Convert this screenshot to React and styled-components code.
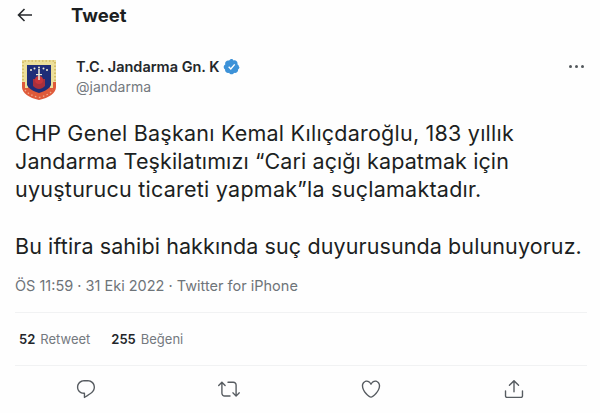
import React from "react";
import styled, { createGlobalStyle } from "styled-components";

const Global = createGlobalStyle`
  html, body { margin: 0; padding: 0; background: #fff; }
  body { font-family: "Inter", "Liberation Sans", sans-serif; color: #14171a; }
`;

const Page = styled.div`
  width: 600px; height: 413px; overflow: hidden; background: #fefefe;
  display: flex; flex-direction: column; box-sizing: border-box;
`;
const Header = styled.header`
  height: 30px; display: flex; align-items: center; padding-left: 16px; gap: 37px;
`;
const HeaderTitle = styled.h1`
  margin: 0; font-size: 18.5px; font-weight: 700; color: #1c1f22;
`;
const AuthorRow = styled.div`
  margin-top: 26px; padding: 0 16px 0 22px; display: flex; align-items: flex-start;
`;
const EmblemBox = styled.div`
  margin-top: 4px; width: 34px; height: 40px; flex: none; display: flex;
`;
const AuthorText = styled.div`
  margin-left: 20px; display: flex; flex-direction: column; flex: 1;
`;
const NameRow = styled.div`
  display: flex; align-items: center; gap: 3px; height: 21px;
  font-size: 14.5px; font-weight: 600; color: #24272a;
`;
const Handle = styled.div`
  margin-top: 1px; font-size: 14px; line-height: 18px; color: #74797e;
`;
const More = styled.div`
  display: flex; gap: 3px; margin-top: 9px;
`;
const Dot = styled.span`
  width: 3px; height: 3px; border-radius: 50%; background: #53585c;
`;
const Body = styled.div`
  margin: 19px 0 0 15px; font-size: 21.5px; line-height: 28.2px; color: #1c1f22;
`;
const BodyLine = styled.div`
  white-space: nowrap;
  letter-spacing: ${p => p.$track}px;
  margin-top: ${p => (p.$gap ? "28.2px" : "0")};
`;
const Meta = styled.div`
  margin: 16px 0 0 15px; font-size: 14.5px; line-height: 20px; color: #6e7479;
`;
const Stats = styled.div`
  margin: 16px 13px 0 15px; height: 54px; box-sizing: border-box;
  border-top: 1px solid #f1f2f3; border-bottom: 1px solid #f1f2f3;
  display: flex; align-items: center; gap: 21px; padding-left: 4px;
  font-size: 13px; color: #74797e;
`;
const Stat = styled.span`
  b { font-weight: 600; color: #22252a; margin-right: 5px; }
`;
const Actions = styled.div`
  display: flex; justify-content: space-between; padding: 0 75px 0 75px; margin-top: 12px;
  color: #565b60;
`;

const Back = () => (
  <svg width="18" height="16" viewBox="0 0 18 16" fill="none" stroke="#26292c" strokeWidth="1.6">
    <path d="M16 8H2.500M8.500 2 2.500 8l6 6" />
  </svg>
);
const Verified = () => (
  <svg width="17" height="17" viewBox="0 0 24 24">
    <path fill="#3d92d8" d="M22.500 12.500c0-1.600-.9-3-2.200-3.700.2-.4.2-1 .2-1.500 0-2.300-1.900-4.200-4.200-4.200-.5 0-1 .1-1.500.3C14.100 2.100 13.100 1.500 12 1.500s-2.600.9-3.300 2.200c-.5-.2-1-.3-1.500-.3-2.300 0-4.200 1.900-4.200 4.200 0 .5.100 1 .2 1.500-1.300.7-2.200 2.100-2.200 3.700 0 1.500.8 2.800 2 3.500 0 .2-.1.400-.1.700 0 2.300 1.900 4.200 4.200 4.200.5 0 1-.1 1.500-.3.7 1.300 2 2.200 3.500 2.200s2.800-.9 3.500-2.200c.5.200 1 .3 1.500.3 2.300 0 4.200-1.900 4.200-4.200 0-.3 0-.5-.1-.7 1.200-.7 2-2 2-3.500z" />
    <path fill="none" stroke="#fff" strokeWidth="2" d="M8 12.500l3 3 5.500-6.500" />
  </svg>
);
const Emblem = () => (
  <svg width="34" height="40" viewBox="0 0 34 40">
    <path fill="#ecdf9a" d="M0 0h34v26H0z" />
    <path fill="none" stroke="#c9a94a" strokeWidth="1.200" strokeDasharray="1.500 2" d="M1 24V1h32v23" />
    <path fill="#df5a3a" d="M0 22h34v5c0 6-7 11-17 13C7 38 0 33 0 27z" />
    <path fill="#ecdf9a" d="M3 22h3v6H3zM28 22h3v6h-3z" />
    <path fill="#1e2d78" d="M5 5h24v20c-2 4-6 6-12 8-6-2-10-4-12-8z" />
    <path fill="#a9303c" d="M11 19h12v7c-2 2-4 3-6 3s-4-1-6-3z" />
    <circle cx="17" cy="20" r="4" fill="#c8353a" />
    <path fill="#e9e6d6" d="M16.200 9h1.600v11h-1.600z" />
    <path fill="#e9e6d6" d="M14 14h6v1.200h-6z" />
    <g fill="#f2ecd2">
      <circle cx="9" cy="10" r="1" />
      <circle cx="12.500" cy="8.500" r="1" />
      <circle cx="21.500" cy="8.500" r="1" />
      <circle cx="25" cy="10" r="1" />
      <circle cx="17" cy="7.500" r="1" />
    </g>
    <path fill="none" stroke="#f0a98c" strokeDasharray="1.500 2.500" strokeWidth="1.300" d="M3 30c3 4 8 6 14 7.500 6-1.500 11-3.500 14-7.500" />
  </svg>
);
const Icon = ({ children }) => (
  <svg width="22" height="22" viewBox="0 0 24 24" fill="currentColor">
    {children}
  </svg>
);

export default function App() {
  return (
    <Page>
      <Global />
      <Header>
        <Back />
        <HeaderTitle>Tweet</HeaderTitle>
      </Header>
      <AuthorRow>
        <EmblemBox><Emblem /></EmblemBox>
        <AuthorText>
          <NameRow>T.C. Jandarma Gn. K <Verified /></NameRow>
          <Handle>@jandarma</Handle>
        </AuthorText>
        <More><Dot /><Dot /><Dot /></More>
      </AuthorRow>
      <Body>
        <BodyLine $track={0.225}>CHP Genel Başkanı Kemal Kılıçdaroğlu, 183 yıllık</BodyLine>
        <BodyLine $track={0.106}>Jandarma Teşkilatımızı “Cari açığı kapatmak için</BodyLine>
        <BodyLine $track={0.252}>uyuşturucu ticareti yapmak”la suçlamaktadır.</BodyLine>
        <BodyLine $gap $track={0.098}>Bu iftira sahibi hakkında suç duyurusunda bulunuyoruz.</BodyLine>
      </Body>
      <Meta>ÖS 11:59 · 31 Eki 2022 · Twitter for iPhone</Meta>
      <Stats>
        <Stat><b>52</b>Retweet</Stat>
        <Stat><b>255</b>Beğeni</Stat>
      </Stats>
      <Actions>
        <Icon><path d="M14.046 2.242l-4.148-.01h-.002c-4.374 0-7.8 3.427-7.8 7.802 0 4.098 3.186 7.206 7.465 7.37v3.828c0 .108.044.286.12.403.142.225.384.347.632.347.138 0 .277-.038.402-.118.264-.168 6.473-4.14 8.088-5.506 1.902-1.61 3.04-3.97 3.043-6.312v-.017c-.006-4.367-3.43-7.787-7.8-7.788zm3.787 12.972c-1.134.96-4.862 3.405-6.772 4.643V16.67c0-.414-.335-.75-.75-.75h-.396c-3.66 0-6.318-2.476-6.318-5.886 0-3.534 2.768-6.302 6.3-6.302l4.147.01h.002c3.532 0 6.3 2.766 6.302 6.296-.003 1.91-.942 3.844-2.514 5.176z" /></Icon>
        <Icon><path d="M23.77 15.67c-.292-.293-.767-.293-1.06 0l-2.22 2.22V7.65c0-2.068-1.683-3.75-3.75-3.75h-5.85c-.414 0-.75.336-.75.75s.336.75.75.75h5.85c1.24 0 2.25 1.01 2.25 2.25v10.24l-2.22-2.22c-.293-.293-.768-.293-1.06 0s-.294.768 0 1.06l3.5 3.5c.145.147.337.22.53.22s.383-.072.53-.22l3.5-3.5c.294-.292.294-.767 0-1.06zm-10.66 3.28H7.26c-1.24 0-2.25-1.01-2.25-2.25V6.46l2.22 2.22c.148.147.34.22.532.22s.384-.073.53-.22c.293-.293.293-.768 0-1.06l-3.5-3.5c-.293-.294-.768-.294-1.06 0l-3.5 3.5c-.294.292-.294.767 0 1.06s.767.293 1.06 0l2.22-2.22V16.7c0 2.068 1.683 3.75 3.75 3.75h5.85c.414 0 .75-.336.75-.75s-.337-.75-.75-.75z" /></Icon>
        <Icon><path d="M12 21.638h-.014C9.403 21.59 1.95 14.856 1.95 8.478c0-3.064 2.525-5.754 5.403-5.754 2.29 0 3.83 1.58 4.646 2.73.814-1.148 2.354-2.73 4.645-2.73 2.88 0 5.404 2.69 5.404 5.755 0 6.376-7.454 13.11-10.037 13.157H12zM7.354 4.225c-2.08 0-3.903 1.988-3.903 4.255 0 5.74 7.034 11.596 8.55 11.658 1.518-.062 8.55-5.917 8.55-11.658 0-2.267-1.823-4.255-3.903-4.255-2.528 0-3.94 2.936-3.952 2.965-.23.562-1.156.562-1.387 0-.014-.03-1.425-2.965-3.954-2.965z" /></Icon>
        <Icon>
          <path d="M17.53 7.47l-5-5c-.293-.293-.768-.293-1.06 0l-5 5c-.294.293-.294.768 0 1.06s.767.294 1.06 0l3.72-3.72V15c0 .414.336.75.75.75s.75-.336.75-.75V4.81l3.72 3.72c.146.147.338.22.53.22s.384-.072.53-.22c.293-.293.293-.767 0-1.06z" />
          <path d="M19.708 21.944H4.292C3.028 21.944 2 20.916 2 19.652V14c0-.414.336-.75.75-.75s.75.336.75.75v5.652c0 .437.355.792.792.792h15.416c.437 0 .792-.355.792-.792V14c0-.414.336-.75.75-.75s.75.336.75.75v5.652c0 1.264-1.028 2.292-2.292 2.292z" />
        </Icon>
      </Actions>
    </Page>
  );
}
